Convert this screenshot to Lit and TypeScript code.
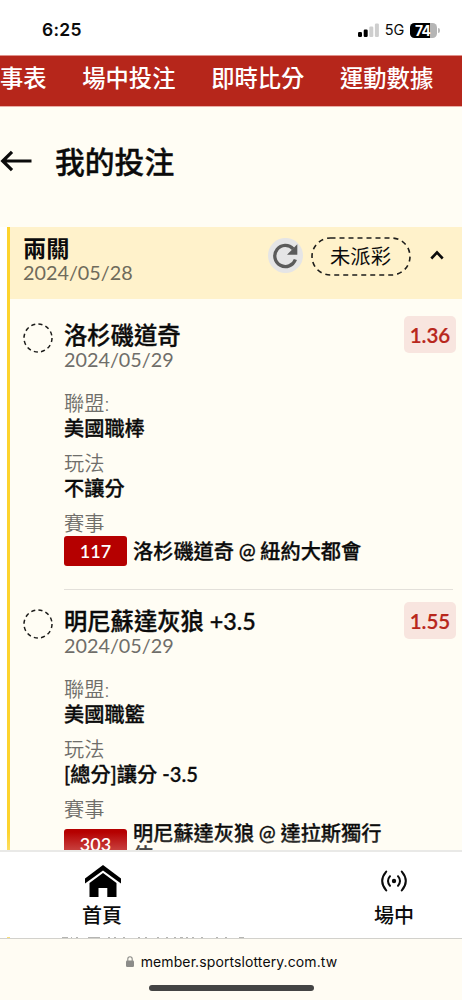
import { LitElement, html, css } from "lit";
import { customElement, property } from "lit/decorators.js";

const base = css`
  * { box-sizing: border-box; }
  :host { display: block; font-family: Lato, "Noto Sans CJK TC", sans-serif; color: #0b0b0b; }
  svg { display: block; }
`;

interface Bet {
  team: string;
  date: string;
  odds: string;
  league: string;
  play: string;
  code: string;
  match: string;
}

const bets: Bet[] = [
  { team: "洛杉磯道奇", date: "2024/05/29", odds: "1.36", league: "美國職棒", play: "不讓分", code: "117", match: "洛杉磯道奇 @ 紐約大都會" },
  { team: "明尼蘇達灰狼 +3.5", date: "2024/05/29", odds: "1.55", league: "美國職籃", play: "[總分]讓分 -3.5", code: "303", match: "明尼蘇達灰狼 @ 達拉斯獨行俠" },
];

@customElement("status-bar")
export class StatusBar extends LitElement {
  static styles = [base, css`
    .bar { display: flex; align-items: center; height: 55px; padding: 5px 22px 0 42px; background: #fff; font-family: Inter, sans-serif; }
    .time { flex: 1; font-size: 17.5px; font-weight: 600; line-height: 24px; letter-spacing: 0.3px; }
    .signal { margin-right: 6px; }
    .net { font-size: 14.5px; font-weight: 400; line-height: 20px; margin-right: 6px; letter-spacing: -0.2px; }
    .battery { flex: none; width: 27px; height: 15px; padding-right: 2px; border-radius: 4.5px; background: linear-gradient(90deg, #000 0 20px, #b5b5b5 20px); color: #fff; font-size: 14px; font-weight: 700; line-height: 15px; text-align: center; letter-spacing: -0.9px; }
    .tip { width: 2px; height: 5px; margin-left: 1px; border-radius: 0 2px 2px 0; background: #b9b9b9; }
  `];
  render() {
    return html`<div class="bar">
      <span class="time">6:25</span>
      <svg class="signal" width="21" height="14" viewBox="0 0 21 14">
        <rect x="0" y="9" width="4" height="5" rx="1.2" fill="#000" />
        <rect x="5.7" y="6.5" width="4" height="7.5" rx="1.2" fill="#000" />
        <rect x="11.3" y="3.5" width="4" height="10.5" rx="1.2" fill="#cecece" />
        <rect x="16.9" y="0.5" width="4" height="13.5" rx="1.2" fill="#cecece" />
      </svg>
      <span class="net">5G</span>
      <span class="battery">74</span><span class="tip"></span>
    </div>`;
  }
}

@customElement("bet-item")
export class BetItem extends LitElement {
  @property({ attribute: false }) bet!: Bet;
  static styles = [base, css`
    .item { display: grid; grid-template-columns: 41.5px 1fr; padding: 12px 6px 0 12.5px; }
    .ring { margin-top: 7px; }
    .head { display: flex; justify-content: space-between; height: 74.5px; }
    .names { padding-top: 4px; }
    .team { font-size: 23.3px; font-weight: 500; line-height: 30px; white-space: nowrap; -webkit-text-stroke: 0.35px currentColor; }
    .date { font-size: 19.8px; line-height: 18px; color: #6f6e6a; }
    .odds { width: 52px; height: 37px; border-radius: 5px; background: #f8e5df; color: #b8271c; font-size: 20.5px; font-weight: 600; line-height: 38px; text-align: center; -webkit-text-stroke: 0.2px currentColor; }
    .field { margin-bottom: 10px; }
    .field, .last { font-size: 20.2px; line-height: 25px; }
    .label { color: #6f6e6a; font-weight: 350; }
    .value, .match { font-weight: 500; -webkit-text-stroke: 0.3px currentColor; }
    .event { display: flex; align-items: center; gap: 6px; min-height: 30px; }
    .code { flex: none; width: 63px; height: 30px; border-radius: 3px; background: #b50000; color: #fff; font-size: 18px; font-weight: 600; line-height: 30px; text-align: center; }
    .match { width: 262px; line-height: 22px; word-spacing: -0.4px; }
    .rule { height: 1.5px; margin: 23px 3px 0 0; background: #e3e0da; }
  `];
  render() {
    const b = this.bet;
    return html`<div class="item">
      <svg class="ring" width="30" height="30" viewBox="0 0 30 30"><circle cx="15" cy="15" r="14" fill="none" stroke="#1d1d1b" stroke-width="1.5" stroke-dasharray="4.1 3.23" /></svg>
      <div>
        <div class="head">
          <div class="names"><div class="team">${b.team}</div><div class="date">${b.date}</div></div>
          <div class="odds">${b.odds}</div>
        </div>
        <div class="field"><div class="label">聯盟:</div><div class="value">${b.league}</div></div>
        <div class="field"><div class="label">玩法</div><div class="value">${b.play}</div></div>
        <div class="label last">賽事</div>
        <div class="field event"><span class="code">${b.code}</span><span class="match">${b.match}</span></div>
        <div class="rule"></div>
      </div>
    </div>`;
  }
}

@customElement("app-root")
export class AppRoot extends LitElement {
  static styles = [base, css`
    .page { display: flex; flex-direction: column; width: 462px; height: 1000px; background: #fffdf4; overflow: hidden; }
    .nav { flex: none; display: flex; gap: 35.7px; height: 52px; overflow: hidden; border-top: 1px solid #e0918b; border-bottom: 1px solid #e9aea6; background: #b6261b; color: #fff; font-size: 23.3px; font-weight: 500; line-height: 44px; white-space: nowrap; }
    .title { flex: none; display: flex; align-items: center; gap: 23px; height: 120px; padding-bottom: 12px; font-size: 29.8px; font-weight: 500; }
    .title span { margin-top: -3px; -webkit-text-stroke: 0.35px currentColor; }
    .list { position: relative; flex: 1; min-height: 0; overflow: hidden; padding-left: 7px; background: #fff; }
    .list::after { content: ""; position: absolute; left: 0; right: 0; bottom: 0; height: 18px; background: linear-gradient(rgba(255, 253, 244, 0), rgba(255, 253, 244, 0.25)); }
    .card { border-left: 3px solid #fdd32d; background: #fffdf4; min-height: 700px; }
    .cardhead { display: flex; height: 72px; margin-bottom: 5px; padding: 8px 18.5px 0 13px; background: #fff2cb; }
    .names { flex: 1; }
    .kind { font-size: 23.2px; font-weight: 700; line-height: 27px; }
    .date { font-size: 19.8px; line-height: 20px; color: #6f6b5c; }
    .reload { margin: 2.5px 7.5px 0 0; }
    .status { display: grid; place-items: center; width: 100px; height: 39px; margin-top: 1.5px; }
    .status > * { grid-area: 1 / 1; }
    .status span { font-size: 20.3px; line-height: 37px; font-weight: 400; }
    .chev { margin: 15px 0 0 19px; }
    .tabs { flex: none; display: flex; justify-content: space-between; height: 88px; padding: 13px 48px 0 82px; border-top: 2px solid #e9e9e7; background: #fff; font-size: 20px; font-weight: 500; }
    .tab { display: flex; flex-direction: column; align-items: center; line-height: 26px; }
    .tab svg { height: 33px; margin-bottom: 4px; }
    .tab .house { margin-left: 2px; }
    .browser { position: relative; flex: none; display: flex; flex-direction: column; align-items: center; height: 62px; border-top: 1px solid #d2d1cc; background: #fffcf3; }
    .peek { position: absolute; left: 0; top: -2px; }
    .url { display: flex; align-items: center; gap: 7px; height: 45px; padding-left: 1px; font-family: Inter, sans-serif; font-size: 14px; letter-spacing: 0.1px; }
    .home { width: 165px; height: 6px; margin-top: 1px; border-radius: 3px; background: #444; }
  `];
  render() {
    return html`<div class="page">
      <status-bar></status-bar>
      <nav class="nav"><span>事表</span><span>場中投注</span><span>即時比分</span><span>運動數據</span></nav>
      <div class="title">
        <svg width="32" height="22" viewBox="0 0 32 22"><path d="M31.5 11H3M12 1.8L2.7 11L12 20.2" fill="none" stroke="#0b0b0b" stroke-width="3.2" /></svg>
        <span>我的投注</span>
      </div>
      <div class="list"><div class="card">
        <div class="cardhead">
          <div class="names"><div class="kind">兩關</div><div class="date">2024/05/28</div></div>
          <svg class="reload" width="35" height="35" viewBox="0 0 35 35">
            <circle cx="17.5" cy="17.5" r="17.5" fill="#e5e5e6" />
            <path d="M27.4 21.5A10.6 10.6 0 1 1 25.2 10.8" fill="none" stroke="#5b5b5b" stroke-width="3.3" />
            <path d="M29.3 6.2V16.8H19Z" fill="#5b5b5b" />
          </svg>
          <div class="status">
            <svg width="100" height="39" viewBox="0 0 100 39"><rect x="1" y="1" width="98" height="37" rx="18.5" fill="none" stroke="#1d1d1b" stroke-width="1.6" stroke-dasharray="5 4" /></svg>
            <span>未派彩</span>
          </div>
          <svg class="chev" width="14" height="10" viewBox="0 0 14 10"><path d="M1.3 8.5L7 2.5L12.7 8.5" fill="none" stroke="#0b0b0b" stroke-width="2.6" /></svg>
        </div>
        ${bets.map((b) => html`<bet-item .bet=${b}></bet-item>`)}
      </div></div>
      <div class="tabs">
        <div class="tab">
          <svg class="house" width="36" height="33" viewBox="0 0 36 33"><path d="M18 0L36 13.5V18.5L18 5.4L0 18.5V13.5Z" /><path d="M18 8L31.5 18V32H22.3V23H13.5V32H4.5V18Z" /></svg>
          <span>首頁</span>
        </div>
        <div class="tab">
          <svg width="28" height="33" viewBox="0 0 28 33" fill="none" stroke="#0b0b0b" stroke-width="2" stroke-linecap="round">
            <circle cx="14" cy="16" r="2.2" fill="#0b0b0b" stroke="none" />
            <path d="M10 11.2Q6 16 10 20.8M18 11.2Q22 16 18 20.8M6.2 6.6Q-1.8 16 6.2 25.4M21.8 6.6Q29.8 16 21.8 25.4" />
          </svg>
          <span>場中</span>
        </div>
      </div>
      <div class="browser">
        <svg class="peek" width="250" height="1" viewBox="0 0 250 1">
          <path d="M7 .5h3" stroke="#fbe07a" />
          <path d="M62 .5h6M71 .5h1M76 .5h2M88 .5h12M108 .5h2M114 .5h2M123 .5h2M138 .5h2M145 .5h2M157 .5h2M166 .5h2M174 .5h2M180 .5h3M186 .5h2M192 .5h2M201 .5h2M216 .5h2M225 .5h2M239 .5h5" stroke="#b5b5b2" />
        </svg>
        <div class="url">
          <svg width="8" height="11" viewBox="0 0 8 11"><rect y="4.5" width="8" height="6.5" rx="1.2" fill="#8c8c89" /><path d="M1.8 5V3A2.2 2.2 0 0 1 6.2 3V5" fill="none" stroke="#8c8c89" stroke-width="1.1" /></svg>
          <span>member.sportslottery.com.tw</span>
        </div>
        <div class="home"></div>
      </div>
    </div>`;
  }
}
